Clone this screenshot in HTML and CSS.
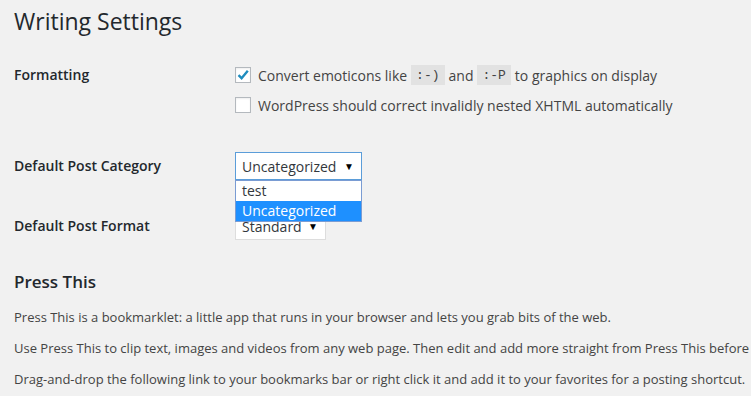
FILE: index.html
```html
<!DOCTYPE html>
<html lang="en">

<head>
    <meta charset="UTF-8">
    <meta name="viewport" content="width=device-width, initial-scale=1.0">
    <title>Writing Settings</title>
    <link rel="stylesheet" href="styles.css">
</head>

<body>
    <div class="wrap">
        <h1>Writing Settings</h1>

        <div class="form-table">
            <div class="label label-top">Formatting</div>
            <div class="field">
                <label class="check-line">
                    <span class="checkbox checked">
                        <svg width="14" height="14" viewBox="0 0 14 14"><path d="M2.5 7.2 L5.6 10.2 L11.8 2.8" fill="none" stroke="#1e8cbe" stroke-width="2.4"/></svg>
                    </span>
                    Convert emoticons like <code>:-)</code> and <code>:-P</code> to graphics on display
                </label>
                <label class="check-line">
                    <span class="checkbox"></span>
                    WordPress should correct invalidly nested XHTML automatically
                </label>
            </div>

            <div class="label">Default Post Category</div>
            <div class="field">
                <div class="select-wrap">
                    <div class="select focused">Uncategorized<span class="arrow">▼</span></div>
                    <ul class="dropdown">
                        <li>test</li>
                        <li class="selected">Uncategorized</li>
                    </ul>
                </div>
            </div>

            <div class="label">Default Post Format</div>
            <div class="field">
                <div class="select small">Standard<span class="arrow">▼</span></div>
            </div>
        </div>

        <h2>Press This</h2>
        <p>Press This is a bookmarklet: a little app that runs in your browser and lets you grab bits of the web.</p>
        <p>Use Press This to clip text, images and videos from any web page. Then edit and add more straight from Press This before you save or publish it in a post on your site.</p>
        <p>Drag-and-drop the following link to your bookmarks bar or right click it and add it to your favorites for a posting shortcut.</p>
    </div>
</body>

</html>
```

FILE: styles.css
```css
* {
    margin: 0;
    padding: 0;
    box-sizing: border-box;
}

body {
    background: #f1f1f1;
    color: #444;
    font-family: 'Open Sans', sans-serif;
    font-size: 13px;
    overflow: hidden;
}

.wrap {
    padding-left: 14px;
    white-space: nowrap;
}

h1 {
    font-size: 23px;
    font-weight: 400;
    line-height: 29px;
    color: #23282d;
    padding-top: 7px;
}

.form-table {
    display: grid;
    grid-template-columns: 221px 1fr;
    row-gap: 32px;
    margin-top: 24px;
}

.label {
    font-size: 14px;
    font-weight: 600;
    color: #23282d;
    line-height: 28px;
}

.label-top {
    padding-top: 1px;
}

.field {
    font-size: 14px;
}

.check-line {
    display: flex;
    align-items: center;
    height: 30px;
}

.checkbox {
    width: 16px;
    height: 16px;
    border: 1px solid #b4b9be;
    background: #fff;
    margin-right: 7px;
    display: flex;
    align-items: center;
    justify-content: center;
    box-shadow: inset 0 1px 2px rgba(0, 0, 0, 0.07);
}

code {
    font-family: 'Liberation Mono', monospace;
    font-size: 13px;
    background: #e2e2e2;
    padding: 3px 5px 2px;
    margin: 0 4px;
}

.select-wrap {
    position: relative;
    width: 127px;
}

.select {
    height: 28px;
    width: 127px;
    border: 1px solid #ddd;
    background: #fff;
    color: #32373c;
    line-height: 27px;
    padding-left: 6px;
    position: relative;
}

.select.focused {
    border-color: #5b9dd9;
}

.select.small {
    width: 91px;
}

.arrow {
    position: absolute;
    right: 7px;
    top: 0;
    font-size: 10px;
    color: #000;
}

.dropdown {
    position: absolute;
    top: 28px;
    left: 0;
    width: 127px;
    list-style: none;
    background: #fff;
    border: 1px solid #7a9cd3;
    z-index: 2;
    color: #32373c;
}

.dropdown li {
    height: 20px;
    line-height: 20px;
    padding-left: 6px;
}

.dropdown li.selected {
    background: #1e90ff;
    color: #fff;
}

h2 {
    font-size: 17px;
    font-weight: 600;
    color: #23282d;
    line-height: 22px;
    margin-top: 31px;
}

p {
    line-height: 20px;
    margin-top: 11px;
}

h2 + p {
    margin-top: 14px;
}
```
